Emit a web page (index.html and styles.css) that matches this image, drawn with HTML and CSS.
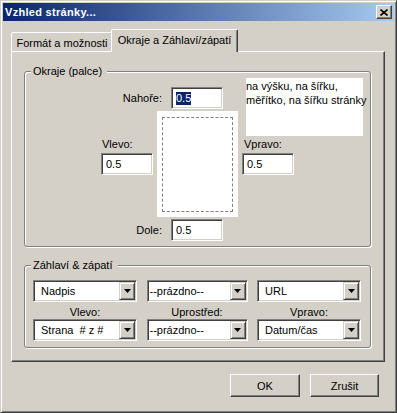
FILE: index.html
```html
<!doctype html>
<html>
<head>
    <meta charset="utf-8" />
    <title>Vzhled stránky...</title>
    <link rel="stylesheet" href="styles.css">
</head>

<body>
    <div class="window">
        <div class="titlebar">
            <span class="title">Vzhled stránky...</span>
            <span class="close-btn">
                <svg width="8" height="7" viewBox="0 0 8 7">
                    <path d="M0.5 0.5 L7.5 6.5 M7.5 0.5 L0.5 6.5" stroke="#000" stroke-width="1.6" fill="none" />
                </svg>
            </span>
        </div>

        <div class="tabs">
            <div class="tab">Formát a možnosti</div>
            <div class="tab active">Okraje a Záhlaví/zápatí</div>
        </div>

        <div class="panel">
            <div class="group margins">
                <div class="group-title">Okraje (palce)</div>
                <div class="margin-grid">
                    <div class="field top-field">
                        <span>Nahoře:</span>
                        <div class="textbox"><span class="sel">0.5</span></div>
                    </div>
                    <div class="orient-info">na výšku, na šířku,<br>měřítko, na šířku stránky</div>
                    <div class="side left-side">
                        <span>Vlevo:</span>
                        <div class="textbox">0.5</div>
                    </div>
                    <div class="preview">
                        <div class="preview-area"></div>
                    </div>
                    <div class="side right-side">
                        <span>Vpravo:</span>
                        <div class="textbox">0.5</div>
                    </div>
                    <div class="field bottom-field">
                        <span>Dole:</span>
                        <div class="textbox">0.5</div>
                    </div>
                </div>
            </div>

            <div class="group headers">
                <div class="group-title">Záhlaví &amp; zápatí</div>
                <div class="hf-grid">
                    <div class="combo"><span class="combo-text">Nadpis</span><span class="combo-btn"><svg width="7" height="4" viewBox="0 0 7 4"><path d="M0 0 H7 L3.5 4 Z" fill="#000" /></svg></span></div>
                    <div class="combo mid"><span class="combo-text">--prázdno--</span><span class="combo-btn"><svg width="7" height="4" viewBox="0 0 7 4"><path d="M0 0 H7 L3.5 4 Z" fill="#000" /></svg></span></div>
                    <div class="combo"><span class="combo-text">URL</span><span class="combo-btn"><svg width="7" height="4" viewBox="0 0 7 4"><path d="M0 0 H7 L3.5 4 Z" fill="#000" /></svg></span></div>

                    <div class="hf-label">Vlevo:</div>
                    <div class="hf-label">Uprostřed:</div>
                    <div class="hf-label">Vpravo:</div>

                    <div class="combo"><span class="combo-text">Strana  # z #</span><span class="combo-btn"><svg width="7" height="4" viewBox="0 0 7 4"><path d="M0 0 H7 L3.5 4 Z" fill="#000" /></svg></span></div>
                    <div class="combo mid"><span class="combo-text">--prázdno--</span><span class="combo-btn"><svg width="7" height="4" viewBox="0 0 7 4"><path d="M0 0 H7 L3.5 4 Z" fill="#000" /></svg></span></div>
                    <div class="combo"><span class="combo-text">Datum/čas</span><span class="combo-btn"><svg width="7" height="4" viewBox="0 0 7 4"><path d="M0 0 H7 L3.5 4 Z" fill="#000" /></svg></span></div>
                </div>
            </div>
        </div>

        <div class="buttons">
            <button class="btn ok">OK</button>
            <button class="btn cancel">Zrušit</button>
        </div>
    </div>
</body>

</html>
```

FILE: styles.css
```css
:root {
    --face: #d4d0c8;
    --light: #ffffff;
    --shadow: #808080;
    --dark: #404040;
    --sel: #0a246a;
}
html, body {
    background-color: var(--face);
}
body {
    margin: 0;
    font-family: "Liberation Sans", Arial, sans-serif;
    font-size: 11px;
    color: #000;
}

.window {
    box-sizing: border-box;
    width: 397px;
    height: 413px;
    padding: 2px;
    border: 1px solid;
    border-color: var(--face) var(--dark) var(--dark) var(--face);
    box-shadow: inset 1px 1px var(--light), inset -1px -1px var(--shadow);
    background-color: var(--face);
}

/* title bar */
.titlebar {
    height: 18px;
    display: flex;
    align-items: center;
    justify-content: space-between;
    padding-left: 2px;
    background: linear-gradient(to right, #0a246a, #a6caf0);
    color: #fff;
}
    .title {
        font-weight: bold;
        font-size: 11px;
        letter-spacing: 0.3px;
    }
    .close-btn {
        box-sizing: border-box;
        width: 16px;
        height: 14px;
        margin-right: 2px;
        display: flex;
        align-items: center;
        justify-content: center;
        background-color: var(--face);
        border: 1px solid;
        border-color: var(--light) var(--dark) var(--dark) var(--light);
        box-shadow: inset -1px -1px var(--shadow);
    }

/* tabs */
.tabs {
    height: 22px;
    margin: 8px 0 0 8px;
    display: flex;
    align-items: flex-end;
}
.tab {
    box-sizing: border-box;
    height: 19px;
    display: flex;
    align-items: center;
    justify-content: center;
    background-color: var(--face);
    border: 1px solid;
    border-bottom: none;
    border-color: var(--light) var(--dark) transparent var(--light);
    border-radius: 2px 2px 0 0;
    box-shadow: inset -1px 0 var(--shadow);
}
    .tab:first-child {
        width: 102px;
        padding-top: 1px;
    }
    .tab.active {
        position: relative;
        z-index: 1;
        width: 127px;
        height: 23px;
        margin-left: -2px;
        margin-bottom: -1px;
        padding-bottom: 3px;
    }

.panel {
    box-sizing: border-box;
    width: 374px;
    height: 311px;
    margin-left: 8px;
    padding: 19px 13px 0 12px;
    border: 1px solid;
    border-color: var(--light) var(--dark) var(--dark) var(--light);
    box-shadow: inset -1px -1px var(--shadow);
}

/* etched group boxes */
.group {
    border: 1px solid var(--shadow);
    border-radius: 3px;
    box-shadow: inset 1px 1px var(--light), 1px 1px var(--light);
}
.group-title {
    width: fit-content;
    margin: -7px 0 0 6px;
    padding: 0 5px 0 2px;
    line-height: 13px;
    background-color: var(--face);
}
.group.margins {
    padding-bottom: 5px;
}
.group.headers {
    margin-top: 18px;
    padding-bottom: 6px;
}

/* sunken text box */
.textbox {
    box-sizing: border-box;
    width: 52px;
    height: 22px;
    padding: 1px 1px 1px 4px;
    display: flex;
    align-items: center;
    background-color: #fff;
    border: 1px solid;
    border-color: var(--shadow) var(--light) var(--light) var(--shadow);
    box-shadow: inset 1px 1px var(--dark), inset -1px -1px var(--face);
}
    .sel {
        line-height: 13px;
        background-color: var(--sel);
        color: #fff;
    }

/* margins */
.margin-grid {
    display: grid;
    grid-template-columns: 56px 85px 1fr;
    grid-template-rows: 33px 106px 24px;
    padding-left: 76px;
}
.field {
    display: flex;
    align-items: center;
    justify-content: flex-end;
    gap: 9px;
    padding-right: 19px;
    grid-column: 1 / 3;
    align-self: end;
}
    .top-field {
        grid-row: 1;
        margin-bottom: 2px;
    }
    .bottom-field {
        grid-row: 3;
    }
.orient-info {
    grid-column: 3;
    grid-row: 1 / 3;
    align-self: start;
    width: 117px;
    height: 58px;
    margin-left: 4px;
    padding-top: 1px;
    box-sizing: border-box;
    line-height: 14px;
    white-space: nowrap;
    background-color: #fff;
}
.side {
    grid-row: 2;
    align-self: start;
    margin-top: 27px;
    display: flex;
    flex-direction: column;
    gap: 2px;
    line-height: 13px;
}
    .left-side {
        grid-column: 1;
    }
        .left-side span {
            padding-left: 1px;
        }
    .right-side {
        grid-column: 3;
    }
        .right-side span {
            padding-left: 2px;
        }
.preview {
    grid-column: 2;
    grid-row: 2;
    width: 81px;
    box-sizing: border-box;
    padding: 6px 5px 5px 5px;
    background-color: #fff;
}
    .preview-area {
        height: 100%;
        box-sizing: border-box;
        border: 1px dashed var(--shadow);
    }

/* header & footer */
.hf-grid {
    margin-top: 8px;
    padding: 0 9px 0 8px;
    display: grid;
    grid-template-columns: 104px 101px 104px;
    grid-template-rows: 22px 17px 22px;
    justify-content: space-between;
}
.hf-label {
    text-align: center;
    line-height: 13px;
    padding-top: 4px;
}
.combo {
    box-sizing: border-box;
    height: 22px;
    padding: 1px;
    display: flex;
    background-color: #fff;
    border: 1px solid;
    border-color: var(--shadow) var(--light) var(--light) var(--shadow);
    box-shadow: inset 1px 1px var(--dark), inset -1px -1px var(--face);
}
    .combo-text {
        flex: 1;
        display: flex;
        align-items: center;
        padding-left: 6px;
        white-space: pre;
    }
    .combo.mid .combo-text {
        padding-left: 1px;
    }
    .combo-btn {
        box-sizing: border-box;
        width: 16px;
        display: flex;
        align-items: center;
        justify-content: center;
        background-color: var(--face);
        border: 1px solid;
        border-color: var(--face) var(--dark) var(--dark) var(--face);
        box-shadow: inset 1px 1px var(--light), inset -1px -1px var(--shadow);
    }

/* dialog buttons */
.buttons {
    margin-top: 12px;
    padding-right: 15px;
    display: flex;
    justify-content: flex-end;
    gap: 10px;
}
.btn {
    box-sizing: border-box;
    width: 70px;
    height: 23px;
    padding: 0;
    font-family: inherit;
    font-size: 11px;
    color: #000;
    background-color: var(--face);
    border: 1px solid;
    border-color: var(--light) var(--dark) var(--dark) var(--light);
    box-shadow: inset -1px -1px var(--shadow);
}
    .btn.cancel {
        width: 69px;
    }
```
